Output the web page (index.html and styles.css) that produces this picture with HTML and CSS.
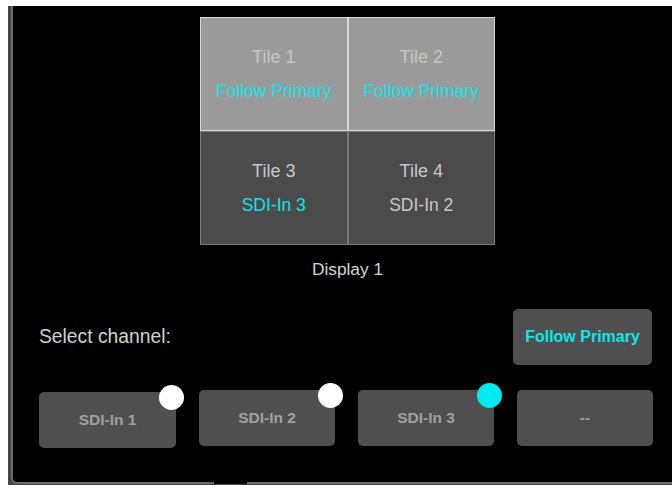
FILE: index.html
```html
<!DOCTYPE html>
<html lang="en">
<head>
  <meta charset="UTF-8" />
  <title>Tile Source</title>
  <link rel="stylesheet" href="styles.css">
</head>
<body>

  <div class="frame">
    <div class="panel">

      <div class="display">
        <div class="tiles">
          <div class="tile tile-top">
            <span class="tile-name">Tile 1</span>
            <span class="tile-src active">Follow Primary</span>
          </div>
          <div class="tile tile-top">
            <span class="tile-name">Tile 2</span>
            <span class="tile-src active">Follow Primary</span>
          </div>
          <div class="tile">
            <span class="tile-name">Tile 3</span>
            <span class="tile-src active">SDI-In 3</span>
          </div>
          <div class="tile">
            <span class="tile-name">Tile 4</span>
            <span class="tile-src">SDI-In 2</span>
          </div>
        </div>
        <div class="display-name">Display 1</div>
      </div>

      <div class="select-row">
        <span class="select-label">Select channel:</span>
        <button class="btn btn-follow">Follow Primary</button>
      </div>

      <div class="channels">
        <button class="btn channel">SDI-In 1<span class="dot"></span></button>
        <button class="btn channel">SDI-In 2<span class="dot"></span></button>
        <button class="btn channel">SDI-In 3<span class="dot dot-on"></span></button>
        <button class="btn channel">--</button>
      </div>

    </div>
  </div>

</body>
</html>
```

FILE: styles.css
```css
body {
  margin: 0;
  background-color: #fff;
  font-family: 'Liberation Sans', Arial, sans-serif;
  overflow: hidden;
}

.frame {
  margin: 6px 0 0 8px;
  width: 674px;
  height: 479px;
  padding-left: 3px;
  background-color: #464646;
  box-sizing: border-box;
}

.panel {
  position: relative;
  width: 671px;
  height: 478px;
  box-sizing: border-box;
  background-color: #000;
  border-left: 2px solid #6a6a6a;
  border-bottom: 2px solid #6a6a6a;
  border-bottom-left-radius: 6px;
}

.panel::after {
  content: "";
  position: absolute;
  left: 201px;
  bottom: -2px;
  width: 33px;
  height: 2px;
  background-color: #000;
}

.display {
  display: flex;
  flex-direction: column;
  align-items: center;
  padding-top: 11px;
}

.tiles {
  display: grid;
  grid-template-columns: 1fr 1fr;
  grid-template-rows: 114px 114px;
  width: 295px;
}

.tile {
  display: flex;
  flex-direction: column;
  align-items: center;
  justify-content: center;
  gap: 12px;
  background-color: #4b4b4b;
  border: 1px solid #7a7a7a;
}

.tile-top {
  background-color: #9b9b9b;
  border-color: #d8d8d8;
}

.tile-name {
  font-size: 18px;
  line-height: 22px;
  color: #c8c8c8;
}

.tile-top .tile-name {
  color: #c4c4c4;
}

.tile-src {
  font-size: 17.5px;
  line-height: 22px;
  color: #c8c8c8;
}

.tile-src.active {
  color: #10e4ea;
}

.display-name {
  margin-top: 13px;
  font-size: 17.3px;
  line-height: 22px;
  color: #d6d6d6;
}

.select-row {
  display: flex;
  align-items: center;
  justify-content: space-between;
  margin-top: 29px;
  padding: 0 30px 0 26px;
}

.select-label {
  font-size: 19.3px;
  color: #d2d2d2;
}

.btn {
  border: none;
  border-radius: 5px;
  background-color: #4f4f4f;
  font-family: inherit;
  font-weight: bold;
  padding: 0;
}

.btn-follow {
  width: 139px;
  height: 56px;
  font-size: 16px;
  color: #10e4ea;
}

.channels {
  display: flex;
  align-items: flex-start;
  gap: 23px;
  margin-top: 25px;
  padding-left: 26px;
}

.channel {
  position: relative;
  width: 136px;
  height: 56px;
  font-size: 15.5px;
  color: #a0a0a0;
}

.channel:first-child {
  width: 137px;
  margin-top: 2px;
}

.dot {
  position: absolute;
  top: -7px;
  right: -8px;
  width: 25px;
  height: 25px;
  border-radius: 50%;
  background-color: #fff;
}

.dot-on {
  background-color: #00eaf0;
}
```
